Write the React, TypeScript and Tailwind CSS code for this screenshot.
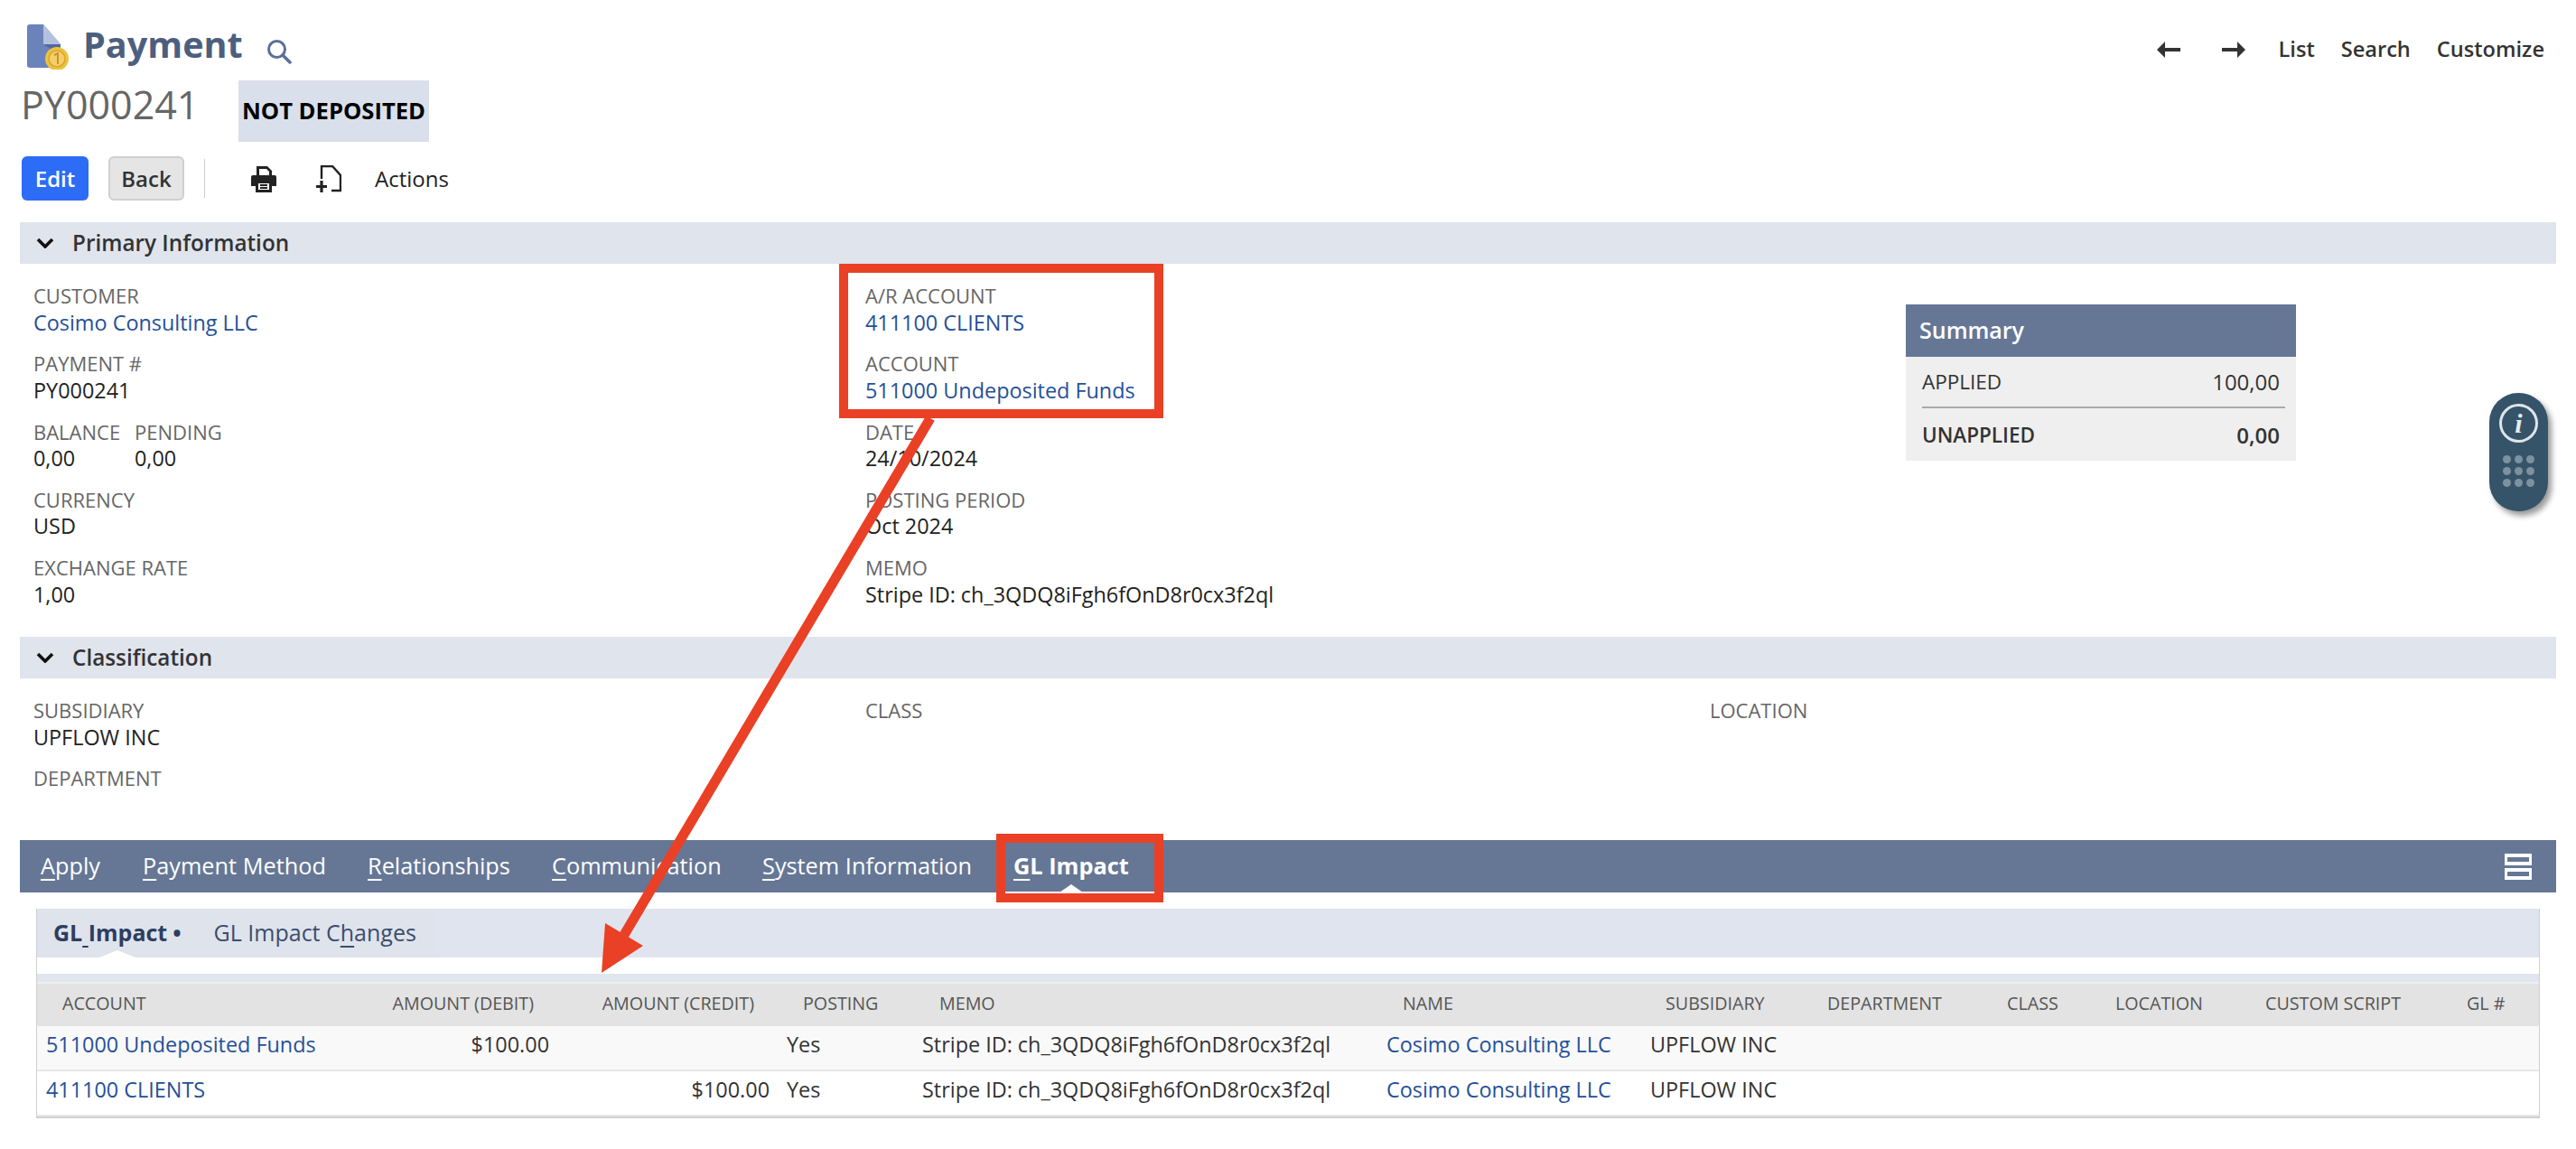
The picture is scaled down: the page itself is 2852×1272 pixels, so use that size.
import React from "react";

const Field = ({ label, value, link, extra }: { label: string; value?: string; link?: boolean; extra?: string }) => (
  <div className={"h-[75.25px] " + (extra ?? "")}>
    <div className="text-[22px] leading-[31px] text-[#666666] whitespace-nowrap">{label}</div>
    {value && (
      <div className={"-mt-[1.5px] text-[23.4px] leading-[31px] whitespace-nowrap " + (link ? "text-[#255098]" : "text-[#222222]")}>{value}</div>
    )}
  </div>
);

const SectionBar = ({ title }: { title: string }) => (
  <div className="mx-[22px] h-[46px] bg-[#e0e4ed] flex items-center">
    <svg width="20" height="12" viewBox="0 0 20 12" className="ml-[18px]">
      <path d="M2 2 L10 10 L18 2" fill="none" stroke="#111111" strokeWidth="3.6" />
    </svg>
    <span className="ml-[20px] text-[24.3px] font-semibold text-[#333333]">{title}</span>
  </div>
);

const Tab = ({ u, rest, w, active }: { u: string; rest: string; w: string; active?: boolean }) => (
  <div className={w + " text-[25.3px] text-white whitespace-nowrap " + (active ? "font-bold" : "")}>
    <span className="underline underline-offset-[5px]">{u}</span>
    {rest}
  </div>
);

const cols =
  "grid grid-cols-[369px_210px_244px_150px_514px_292px_196px_199px_120px_166px_223px_88px]";

const Row = ({ account, debit, credit, bg }: { account: string; debit?: string; credit?: string; bg: string }) => (
  <div className={cols + " h-[50px] items-center pb-[7px] text-[23.4px] text-[#333333] whitespace-nowrap border-b-2 border-[#e8e8e8] " + bg}>
    <div className="pl-[10px] text-[#255098]">{account}</div>
    <div className="pr-[12px] text-right">{debit}</div>
    <div className="pr-[12px] text-right">{credit}</div>
    <div className="pl-[7px]">Yes</div>
    <div className="pl-[7px]">Stripe ID: ch_3QDQ8iFgh6fOnD8r0cx3f2ql</div>
    <div className="pl-[7px] text-[#255098]">Cosimo Consulting LLC</div>
    <div className="pl-[7px]">UPFLOW INC</div>
  </div>
);

export default function App() {
  const heads: [string, string][] = [
    ["ACCOUNT", "pl-[28px]"],
    ["AMOUNT (DEBIT)", "pr-[29px] text-right"],
    ["AMOUNT (CREDIT)", "pr-[29px] text-right"],
    ["POSTING", "pl-[25px]"],
    ["MEMO", "pl-[26px]"],
    ["NAME", "pl-[25px]"],
    ["SUBSIDIARY", "pl-[24px]"],
    ["DEPARTMENT", "pl-[7px]"],
    ["CLASS", "pl-[7px]"],
    ["LOCATION", "pl-[7px]"],
    ["CUSTOM SCRIPT", "pl-[7px]"],
    ["GL #", "pl-[7px]"],
  ];
  return (
    <div className="relative w-[2852px] h-[1272px] overflow-hidden bg-white font-['Open_Sans','Noto_Sans',sans-serif]">
      {/* Title row */}
      <div className="h-[89px] flex items-start pt-[27px] pl-[30px] pr-[35px]">
        <svg width="48" height="50" viewBox="0 0 48 50" className="shrink-0">
          <path d="M3 0 H18 L37 22 V48 H3 Q0 48 0 45 V3 Q0 0 3 0 Z" fill="#6a83bb" />
          <path d="M18 0 L37 22 H18 Z" fill="#b4c1de" />
          <path d="M18 22 H37 V34 Z" fill="#52699f" />
          <circle cx="33" cy="38" r="13" fill="#eec23f" />
          <circle cx="33" cy="38" r="9" fill="#f3cf6a" stroke="#d9a52c" strokeWidth="1.5" />
          <path d="M30 34 L34 32 V44" fill="none" stroke="#c9922a" strokeWidth="2" />
        </svg>
        <div className="h-[46px] flex items-center ml-[14px] text-[39.6px] font-bold text-[#4d5f7e] leading-none">Payment</div>
        <svg width="28" height="28" viewBox="0 0 28 28" className="ml-[26px] mt-[16px]">
          <circle cx="11.5" cy="11.5" r="9" fill="none" stroke="#5a7099" strokeWidth="3" />
          <path d="M18 18 L26 26" stroke="#5a7099" strokeWidth="3.5" strokeLinecap="round" />
        </svg>
        <div className="ml-auto h-[56px] flex items-center text-[23.6px] font-semibold text-[#333333]">
          <svg width="26" height="18" viewBox="0 0 26 18">
            <path d="M0 9 L9 0 V7 H26 V11 H9 V18 Z" fill="#333333" />
          </svg>
          <svg width="26" height="18" viewBox="0 0 26 18" className="ml-[46px]">
            <path d="M26 9 L17 0 V7 H0 V11 H17 V18 Z" fill="#333333" />
          </svg>
          <span className="ml-[37px]">List</span>
          <span className="ml-[29px]">Search</span>
          <span className="ml-[29px]">Customize</span>
        </div>
      </div>

      {/* Record row */}
      <div className="h-[68px] flex pl-[23px]">
        <div className="w-[241px] text-[43px] text-[#666666] leading-[54px]">PY000241</div>
        <div className="w-[211px] h-[68px] bg-[#d9e0eb] flex items-center justify-center text-[25.6px] font-bold text-black whitespace-nowrap">
          NOT DEPOSITED
        </div>
      </div>

      {/* Toolbar */}
      <div className="mt-[16px] h-[49px] flex items-center pl-[24px] text-[24px]">
        <div className="w-[74px] h-[49px] rounded-[6px] bg-[#2c6cf6] text-white font-semibold flex items-center justify-center">Edit</div>
        <div className="ml-[22px] w-[84px] h-[49px] rounded-[6px] bg-[#e5e5e5] border-2 border-[#cfcfcf] text-[#333333] font-semibold flex items-center justify-center">Back</div>
        <div className="ml-[22px] w-[1px] h-[43px] bg-[#cccccc]" />
        <svg width="30" height="30" viewBox="0 0 30 30" className="ml-[50px]">
          <path d="M7 1 H19 L24 6 V11 H21 V7 L18 4 H10 V11 H7 Z" fill="#222222" />
          <path d="M3 11 H27 Q29 11 29 13 V23 H24 V17 H6 V23 H1 V13 Q1 11 3 11 Z" fill="#222222" />
          <path d="M7.5 18.5 H22.5 V28.5 H7.5 Z" fill="none" stroke="#222222" strokeWidth="3" />
          <path d="M11 22 H19 M11 25 H19" stroke="#222222" strokeWidth="1.8" />
        </svg>
        <svg width="28" height="30" viewBox="0 0 28 30" className="ml-[43px]">
          <path d="M6 15 V1 H18 L27 11 V28 H17" fill="none" stroke="#222222" strokeWidth="2.4" />
          <path d="M6 17 V30 M0 23.5 H12" stroke="#222222" strokeWidth="3.2" />
        </svg>
        <span className="ml-[37px] font-medium text-[#222222]">Actions</span>
      </div>

      <div className="h-[24px]" />
      <SectionBar title="Primary Information" />

      {/* Primary information */}
      <div className="h-[413px] pt-[20px] pl-[37px] grid grid-cols-[921px_1152px_432px] items-start">
        <div>
          <Field label="CUSTOMER" value="Cosimo Consulting LLC" link />
          <Field label="PAYMENT #" value="PY000241" />
          <div className="flex h-[75.25px]">
            <Field label="BALANCE" value="0,00" extra="w-[112px]" />
            <Field label="PENDING" value="0,00" />
          </div>
          <Field label="CURRENCY" value="USD" />
          <Field label="EXCHANGE RATE" value="1,00" />
        </div>
        <div>
          <Field label="A/R ACCOUNT" value="411100 CLIENTS" link />
          <Field label="ACCOUNT" value="511000 Undeposited Funds" link />
          <Field label="DATE" value="24/10/2024" />
          <Field label="POSTING PERIOD" value="Oct 2024" />
          <Field label="MEMO" value="Stripe ID: ch_3QDQ8iFgh6fOnD8r0cx3f2ql" />
        </div>
        <div className="mt-[25px] w-[432px]">
          <div className="h-[58px] bg-[#667796] text-white text-[25px] font-semibold flex items-center pl-[15px]">Summary</div>
          <div className="bg-[#efefef] h-[115px] px-[18px] text-[24px] text-[#333333]">
            <div className="h-[57px] mr-[-6px] pr-[6px] border-b-2 border-[#aaaaaa] flex items-center justify-between">
              <span className="text-[22.5px]">APPLIED</span>
              <span className="font-medium">100,00</span>
            </div>
            <div className="h-[58px] flex items-center justify-between pt-[2px]">
              <span className="text-[22.5px] font-semibold">UNAPPLIED</span>
              <span className="font-semibold">0,00</span>
            </div>
          </div>
        </div>
      </div>

      <SectionBar title="Classification" />

      {/* Classification */}
      <div className="h-[179px] pt-[20px] pl-[37px] grid grid-cols-[921px_935px_1fr] items-start">
        <div>
          <Field label="SUBSIDIARY" value="UPFLOW INC" />
          <Field label="DEPARTMENT" />
        </div>
        <Field label="CLASS" />
        <Field label="LOCATION" />
      </div>

      {/* Tabs */}
      <div className="mx-[22px] h-[58px] bg-[#667796] flex items-center pl-[23px]">
        <Tab u="A" rest="pply" w="w-[113px]" />
        <Tab u="P" rest="ayment Method" w="w-[249px]" />
        <Tab u="R" rest="elationships" w="w-[204px]" />
        <Tab u="C" rest="ommunication" w="w-[233px]" />
        <Tab u="S" rest="ystem Information" w="w-[278px]" />
        <Tab u="G" rest="L Impact" w="w-[200px]" active />
        <div className="ml-auto mr-[27px] flex flex-col gap-[3px]">
          <div className="w-[30px] h-[13px] bg-white flex items-center justify-center"><div className="w-[24px] h-[5px] bg-[#667796]" /></div>
          <div className="w-[30px] h-[13px] bg-white flex items-center justify-center"><div className="w-[24px] h-[5px] bg-[#667796]" /></div>
        </div>
      </div>

      {/* Sub tabs + table */}
      <div className="mt-[18px] mx-[40px] border-x border-b-2 border-[#d0d0d0]">
        <div className="h-[54px] bg-[#e0e4ee] flex">
          <div className="relative w-[441px] h-[54px] bg-[#dfe3ec] flex items-center pl-[18px] text-[25px] whitespace-nowrap">
            <span className="font-bold text-[#2c3e60]">GL<span className="underline underline-offset-[5px]"> </span>Impact</span>
            <span className="ml-[6px] font-bold text-[#2c3e60]">•</span>
            <span className="ml-[36px] text-[#3d4d6b]">GL Impact C<span className="underline underline-offset-[5px]">h</span>anges</span>
            <div className="absolute left-[69px] bottom-0 w-0 h-0 border-x-[20px] border-x-transparent border-b-[8px] border-b-white" />
          </div>
        </div>
        <div className="h-[18px] bg-white" />
        <div className="h-[9px] bg-[#e0e5ee]" />
        <div className={cols + " h-[49px] items-center pb-[3px] bg-[#e3e3e3] border-t-2 border-[#eeeeee] text-[19.7px] text-[#555555] whitespace-nowrap"}>
          {heads.map(([t, c]) => (
            <div key={t} className={c}>{t}</div>
          ))}
        </div>
        <Row account="511000 Undeposited Funds" debit="$100.00" bg="bg-[#f9f9f9]" />
        <Row account="411100 CLIENTS" credit="$100.00" bg="bg-white" />
      </div>

      {/* Annotations */}
      <div className="absolute left-[929px] top-[292px] w-[359px] h-[171px] border-[10px] border-[#ea4025]" />
      <div className="absolute left-[1103px] top-[923px] w-[185px] h-[76px] border-[10px] border-[#ea4025]">
        <div className="absolute left-0 right-0 top-[54px] h-[2px] bg-white" />
        <div className="absolute left-[60px] top-[46px] w-0 h-0 border-x-[13px] border-x-transparent border-b-[9px] border-b-white" />
      </div>
      <svg className="absolute left-0 top-0 pointer-events-none" width="2852" height="1272" viewBox="0 0 2852 1272">
        <path d="M1030 463 L691 1035" stroke="#ea4025" strokeWidth="11" fill="none" />
        <path d="M666 1077 L670 1022 L712 1047 Z" fill="#ea4025" />
      </svg>

      {/* Floating widget */}
      <div className="absolute left-[2756px] top-[435px] w-[65px] h-[131px] rounded-[32px] bg-[#355469] shadow-[4px_5px_6px_rgba(0,0,0,0.4)] flex flex-col items-center">
        <div className="mt-[12px] w-[43px] h-[43px] rounded-full border-[3px] border-[#dfe5e9] flex items-center justify-center text-[#e8edf0] text-[30px] italic font-bold font-['Liberation_Serif',serif] leading-none">
          i
        </div>
        <div className="mt-[14px] grid grid-cols-3 gap-x-[4px] gap-y-[4px]">
          {[0, 1, 2, 3, 4, 5, 6, 7, 8].map((n) => (
            <div key={n} className="w-[9px] h-[9px] rounded-full bg-[#7d919f]" />
          ))}
        </div>
      </div>
    </div>
  );
}
